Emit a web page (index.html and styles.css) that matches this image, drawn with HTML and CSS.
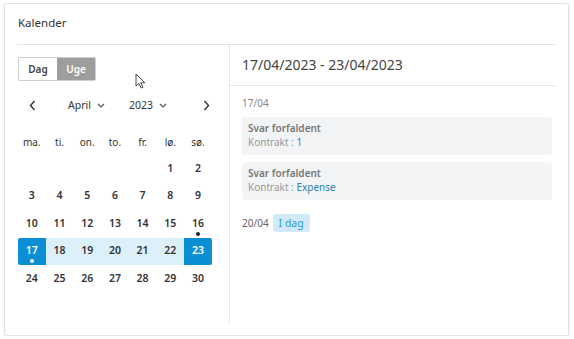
FILE: index.html
```html
<!DOCTYPE html>
<html lang="da">
<head>
    <meta charset="UTF-8">
    <meta name="viewport" content="width=device-width, initial-scale=1.0">
    <title>Kalender</title>
    <link rel="stylesheet" href="styles.css">
</head>
<body>
    <div class="card">
        <div class="cardTitle">Kalender</div>
        <div class="cardBody">
            <div class="leftCol">
                <div class="toggle">
                    <span class="toggleBtn">Dag</span>
                    <span class="toggleBtn active">Uge</span>
                </div>
                <div class="navRow">
                    <span class="navArrow">
                        <svg width="7" height="11" viewBox="0 0 7 11"><path d="M5.5 1 L1.5 5.5 L5.5 10" fill="none" stroke="#333" stroke-width="1.4"/></svg>
                    </span>
                    <span class="navSelect month">April
                        <svg width="8" height="5" viewBox="0 0 8 5"><path d="M1 1 L4 4 L7 1" fill="none" stroke="#555" stroke-width="1.2"/></svg>
                    </span>
                    <span class="navSelect year">2023
                        <svg width="8" height="5" viewBox="0 0 8 5"><path d="M1 1 L4 4 L7 1" fill="none" stroke="#555" stroke-width="1.2"/></svg>
                    </span>
                    <span class="navArrow next">
                        <svg width="7" height="11" viewBox="0 0 7 11"><path d="M1.5 1 L5.5 5.5 L1.5 10" fill="none" stroke="#333" stroke-width="1.4"/></svg>
                    </span>
                </div>
                <div class="monthGrid">
                    <span class="wd">ma.</span>
                    <span class="wd">ti.</span>
                    <span class="wd">on.</span>
                    <span class="wd">to.</span>
                    <span class="wd">fr.</span>
                    <span class="wd">lø.</span>
                    <span class="wd">sø.</span>

                    <span class="day empty"></span>
                    <span class="day empty"></span>
                    <span class="day empty"></span>
                    <span class="day empty"></span>
                    <span class="day empty"></span>
                    <span class="day">1</span>
                    <span class="day">2</span>

                    <span class="day">3</span>
                    <span class="day">4</span>
                    <span class="day">5</span>
                    <span class="day">6</span>
                    <span class="day">7</span>
                    <span class="day">8</span>
                    <span class="day">9</span>

                    <span class="day">10</span>
                    <span class="day">11</span>
                    <span class="day">12</span>
                    <span class="day">13</span>
                    <span class="day">14</span>
                    <span class="day">15</span>
                    <span class="day dot">16</span>

                    <span class="day selStart dot">17</span>
                    <span class="day inRange">18</span>
                    <span class="day inRange">19</span>
                    <span class="day inRange">20</span>
                    <span class="day inRange">21</span>
                    <span class="day inRange">22</span>
                    <span class="day selEnd">23</span>

                    <span class="day">24</span>
                    <span class="day">25</span>
                    <span class="day">26</span>
                    <span class="day">27</span>
                    <span class="day">28</span>
                    <span class="day">29</span>
                    <span class="day">30</span>
                </div>
                <!-- musemarkør -->
                <svg class="cursor" width="11" height="16" viewBox="0 0 11 16">
                    <path d="M1 1 L1 13 L4 10.5 L6.2 15 L8 14.2 L5.8 9.8 L9.8 9.8 Z" fill="#fff" stroke="#444" stroke-width="1" stroke-linejoin="round"/>
                </svg>
            </div>
            <div class="rightCol">
                <div class="rangeHeader">17/04/2023 - 23/04/2023</div>
                <div class="agenda">
                    <div class="agendaDate">17/04</div>
                    <div class="event">
                        <div class="eventTitle">Svar forfaldent</div>
                        <div class="eventSub">Kontrakt : <span class="eventLink">1</span></div>
                    </div>
                    <div class="event">
                        <div class="eventTitle">Svar forfaldent</div>
                        <div class="eventSub">Kontrakt : <span class="eventLink">Expense</span></div>
                    </div>
                    <div class="agendaDate today">20/04 <span class="badge">I dag</span></div>
                </div>
            </div>
        </div>
    </div>
</body>
</html>
```

FILE: styles.css
```css
body {
    margin: 0;
    background-color: #fff;
    font-family: "Noto Sans", "Open Sans", sans-serif;
    color: #333;
}
.card {
    box-sizing: border-box;
    margin: 3px 0 0 4px;
    width: 565px;
    height: 333px;
    padding: 0 12px 12px 12px;
    border: 1px solid #e2e2e2;
    border-radius: 2px;
    box-shadow: 0 1px 3px rgba(0, 0, 0, 0.08);
    display: flex;
    flex-direction: column;
}
.cardTitle {
    height: 40px;
    line-height: 38px;
    font-size: 11.5px;
    color: #333;
    padding-left: 1px;
}
.cardBody {
    flex: 1;
    display: flex;
    border-top: 1px solid #e3e3e3;
}
.leftCol {
    position: relative;
    width: 213px;
    box-sizing: border-box;
    padding: 11px 0 0 1px;
    border-right: 1px solid #e6e6e6;
}
.toggle {
    display: inline-flex;
    border: 1px solid #cfcfcf;
    border-radius: 2px;
    height: 24px;
    box-sizing: border-box;
}
.toggleBtn {
    width: 38px;
    display: flex;
    align-items: center;
    justify-content: center;
    font-size: 10px;
    font-weight: 600;
    color: #444;
}
.toggleBtn.active {
    background-color: #9d9d9d;
    color: #fff;
}
.navRow {
    display: flex;
    align-items: center;
    height: 24px;
    margin-top: 12px;
    width: 202px;
    font-size: 10.5px;
    color: #333;
}
.navArrow {
    width: 28px;
    display: flex;
    justify-content: center;
}
.navArrow.next {
    margin-left: auto;
}
.navSelect {
    display: flex;
    align-items: center;
    gap: 6px;
}
.month {
    margin-left: 22px;
}
.year {
    margin-left: 24px;
}
.monthGrid {
    display: grid;
    grid-template-columns: repeat(7, 27.7px);
    grid-template-rows: 26px;
    grid-auto-rows: 27.5px;
    margin-top: 12px;
}
.wd {
    display: flex;
    align-items: center;
    justify-content: center;
    font-size: 10px;
    color: #333;
}
.day {
    position: relative;
    display: flex;
    align-items: center;
    justify-content: center;
    padding-bottom: 2px;
    font-size: 10.5px;
    font-weight: 600;
    color: #333;
}
.day.inRange {
    background-color: #dcf0fa;
}
.selStart, .selEnd {
    background-color: #0a8fd4;
    color: #fff;
}
.selStart {
    border-radius: 2px 0 0 2px;
}
.selEnd {
    border-radius: 0 2px 2px 0;
}
.day.dot::after {
    content: "";
    position: absolute;
    left: 50%;
    bottom: 2px;
    width: 4px;
    height: 4px;
    margin-left: -2px;
    border-radius: 50%;
    background-color: #222;
}
.selStart.dot::after {
    background-color: #fff;
}
.cursor {
    position: absolute;
    left: 118px;
    top: 28px;
}
.rightCol {
    flex: 1;
}
.rangeHeader {
    height: 40px;
    line-height: 40px;
    padding-left: 12px;
    font-size: 14px;
    color: #444;
    border-bottom: 1px solid #e6e6e6;
}
.agenda {
    padding: 9px 4px 0 12px;
}
.agendaDate {
    font-size: 10px;
    color: #888;
    height: 16px;
    line-height: 16px;
    margin-bottom: 6px;
}
.event {
    background-color: #f3f4f6;
    border-radius: 3px;
    padding: 4px 6px 6px 6px;
    margin-bottom: 7px;
    height: 28px;
}
.eventTitle {
    font-size: 10px;
    font-weight: 600;
    color: #777;
    line-height: 14px;
}
.eventSub {
    font-size: 10px;
    color: #999;
    line-height: 15px;
}
.eventLink {
    color: #2a7fb0;
}
.agendaDate.today {
    margin-top: 14px;
    color: #666;
    display: flex;
    align-items: center;
    gap: 4px;
    height: 18px;
}
.badge {
    display: inline-block;
    background-color: #d2eaf8;
    color: #2a9bd4;
    border-radius: 3px;
    padding: 0 6px;
    line-height: 18px;
    font-size: 10.5px;
}
```
